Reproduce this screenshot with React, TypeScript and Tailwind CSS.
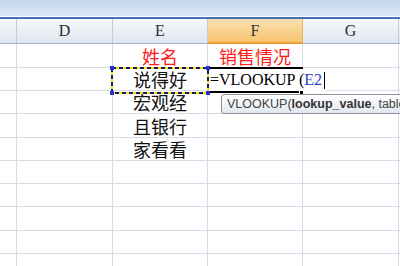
const ROWS = [
  { h: 'h-[24px]', e: '姓名', f: '销售情况', red: true },
  { h: 'h-[23px]', e: '说得好', f: '' },
  { h: 'h-[23px]', e: '宏观经', f: '' },
  { h: 'h-[24px]', e: '且银行', f: '' },
  { h: 'h-[23px]', e: '家看看', f: '' },
  { h: 'h-[23px]', e: '', f: '' },
  { h: 'h-[23px]', e: '', f: '' },
  { h: 'h-[24px]', e: '', f: '' },
  { h: 'h-[23px]', e: '', f: '' },
  { h: 'h-[23px]', e: '', f: '' },
];

const cjk = { fontFamily: '"Noto Sans CJK SC", "Noto Sans", sans-serif' };
const serif = { fontFamily: '"Liberation Serif", "Noto Sans CJK SC", serif' };

function HeaderCell({ label, w, active }: { label: string; w: string; active?: boolean }) {
  return (
    <div
      className={`${w} shrink-0 h-full flex items-center justify-center border-r text-[16px] ${
        active
          ? 'bg-gradient-to-b from-[#fbe2b0] to-[#f5c46c] border-[#e8b264] border-b-2 border-b-[#f29a3c] text-[#333]'
          : 'bg-gradient-to-b from-[#f7f9fc] to-[#dfe6ef] border-[#c3cedb] border-b border-b-[#9db1c9] text-[#2b2b2b]'
      }`}
      style={serif}
    >
      {label}
    </div>
  );
}

export default function App() {
  return (
    <div className="relative w-[400px] h-[266px] overflow-hidden bg-white select-none">
      {/* ribbon strip */}
      <div className="h-[17px] bg-gradient-to-b from-[#c2d6ef] to-[#dbe7f6] border-b border-white" />
      <div className="h-[2px] bg-[#4570b8]" />

      {/* column headers */}
      <div className="flex h-[25px]">
        <HeaderCell label="" w="w-[17px]" />
        <HeaderCell label="D" w="w-[96px]" />
        <HeaderCell label="E" w="w-[95px]" />
        <HeaderCell label="F" w="w-[95px]" active />
        <HeaderCell label="G" w="w-[96px]" />
        <HeaderCell label="" w="w-[10px]" />
      </div>

      {/* grid */}
      <div className="flex flex-col">
        {ROWS.map((r, i) => (
          <div key={i} className={`flex ${r.h}`}>
            <div className="w-[17px] shrink-0 border-r border-b border-[#d5dbe7]" />
            <div className="w-[96px] shrink-0 border-r border-b border-[#d5dbe7]" />
            <div
              className={`w-[95px] shrink-0 border-r border-b border-[#d5dbe7] flex items-center justify-center text-[18px] leading-[18px] ${
                r.red ? 'text-[#ff1a1a]' : 'text-[#111]'
              }`}
              style={cjk}
            >
              {r.e}
            </div>
            <div
              className="w-[95px] shrink-0 border-r border-b border-[#d5dbe7] flex items-center justify-center text-[18px] leading-[18px] text-[#ff1a1a]"
              style={cjk}
            >
              {r.f}
            </div>
            <div className="w-[96px] shrink-0 border-r border-b border-[#d5dbe7]" />
            <div className="w-[10px] shrink-0 border-b border-[#d5dbe7]" />
          </div>
        ))}
      </div>

      {/* editing cell F3 */}
      <div className="absolute left-[208px] top-[69px] w-[118px] h-[22px] bg-white" />
      <div className="absolute left-[207px] top-[67px] w-[96px] h-[2px] bg-black" />
      <div className="absolute left-[207px] top-[91px] w-[96px] h-[2px] bg-black" />
      <div className="absolute left-[299px] top-[90px] w-[5px] h-[5px] bg-black border border-white" />
      <div
        className="absolute left-[210px] top-[69px] h-[22px] flex items-center whitespace-nowrap text-[16px] leading-none text-black"
        style={serif}
      >
        =VLOOKUP (<span className="text-[#2a3fd8]">E2</span>
        <span className="ml-[2px] w-px h-[17px] bg-black" />
      </div>

      {/* marching ants on E3 */}
      <svg className="absolute left-[110px] top-[66px]" width="100" height="29" viewBox="0 0 100 29">
        <rect x="2" y="2" width="96" height="25" fill="none" stroke="#f2e21a" strokeWidth="2" />
        <rect x="2" y="2" width="96" height="25" fill="none" stroke="#1b1b55" strokeWidth="2" strokeDasharray="4 3" />
        <rect x="0" y="0" width="4" height="4" fill="#2233cc" />
        <rect x="96" y="0" width="4" height="4" fill="#2233cc" />
        <rect x="0" y="25" width="4" height="4" fill="#2233cc" />
        <rect x="96" y="25" width="4" height="4" fill="#2233cc" />
      </svg>

      {/* function tooltip */}
      <div
        className="absolute left-[221px] top-[94px] w-[200px] h-[20px] rounded-[3px] border border-[#8e939c] bg-gradient-to-b from-white to-[#e2e7f0] flex items-center pl-[5px] whitespace-nowrap text-[12.5px] leading-none text-[#444]"
        style={{ fontFamily: '"Liberation Sans", Arial, sans-serif' }}
      >
        VLOOKUP(<b className="font-bold text-[#333]">lookup_value</b>, table_array
      </div>
    </div>
  );
}
